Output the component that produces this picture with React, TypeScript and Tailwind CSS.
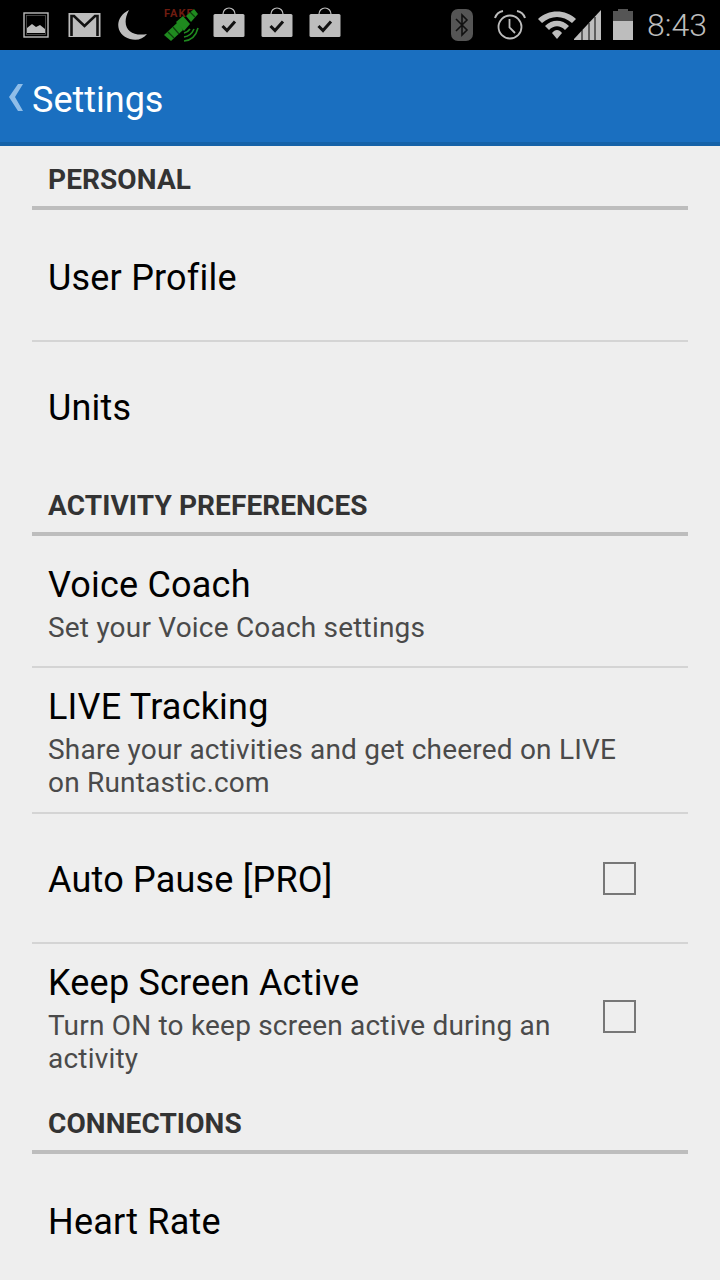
import React from "react";

const FONT = "font-['Roboto',sans-serif]";

function BagIcon() {
  return (
    <svg width="32" height="32" viewBox="0 0 32 32">
      <path d="M10 10 V7 a6 6 0 0 1 12 0 V10" fill="none" stroke="#bdbdbd" strokeWidth="1.2" />
      <rect x="0.5" y="7" width="31" height="23" rx="1.5" fill="#bdbdbd" />
      <path d="M9.5 19 L14 23.5 L22 14.5" fill="none" stroke="#111" strokeWidth="3" />
    </svg>
  );
}

function StatusBar() {
  return (
    <div className="h-[50px] bg-black flex items-center">
      <div className="flex items-center pl-[23px]">
        <svg width="26" height="26" viewBox="0 0 26 26">
          <rect x="1" y="1" width="24" height="24" fill="none" stroke="#bdbdbd" strokeWidth="1.4" />
          <rect x="3.5" y="3.5" width="19" height="19" fill="none" stroke="#555" strokeWidth="0.8" />
          <path d="M4 21 V16 L9 12 L13 15 L17 13 L22 17 V21 Z" fill="#bdbdbd" />
        </svg>
        <svg className="ml-[19px]" width="33" height="26" viewBox="0 0 33 26">
          <rect x="0.5" y="1" width="32" height="24" fill="#bdbdbd" />
          <path d="M3.5 24 V4 H6 L16.5 14 L27 4 H29.5 V24" fill="none" stroke="#111" strokeWidth="2.6" />
        </svg>
        <svg className="ml-[17px]" width="31" height="32" viewBox="0 0 31 32">
          <path d="M11 1 C-4 8 -3 26 12 30 C19 32 25 30 29 25 C12 28 2 18 11 1 Z" fill="#bdbdbd" />
        </svg>
        <svg className="ml-[14px]" width="36" height="36" viewBox="0 0 36 36">
          <text x="1" y="10" fontSize="11" fontWeight="700" fill="#6f1c10" fontFamily="Roboto, sans-serif" letterSpacing="1">FAKE</text>
          <path d="M1 28 L15 15 L20 23 L8 34 Z" fill="#1f8a1f" />
          <path d="M13 15 L20 9 L27 17 L21 24 Z" fill="#1f8a1f" />
          <path d="M23 9 L31 2 L35 7 L28 15 Z" fill="#1f8a1f" />
          <path d="M5 25 L11 31 M10 20 L16 27 M27 5 L32 10" stroke="#0d3d0d" strokeWidth="1.2" />
          <path d="M21 34 Q32 33 35 21 M21 30 Q28 29 31 22 M21 26 Q25 25 27 22" fill="none" stroke="#1f8a1f" strokeWidth="1.6" />
        </svg>
        <div className="ml-[14px] mb-[4px] flex gap-[16px]">
          <BagIcon />
          <BagIcon />
          <BagIcon />
        </div>
      </div>
      <div className="ml-auto flex items-center pr-[13px]">
        <svg width="22" height="32" viewBox="0 0 22 32">
          <rect x="0" y="0" width="22" height="32" rx="7" fill="#555" />
          <path d="M5 10 L16 21 L11 26 V6 L16 11 L5 22" fill="none" stroke="#111" strokeWidth="1.6" />
        </svg>
        <svg className="ml-[21px]" width="32" height="32" viewBox="0 0 32 32">
          <circle cx="16" cy="18" r="11.5" fill="none" stroke="#bdbdbd" strokeWidth="1.8" />
          <path d="M15.5 10 V18.5 L21 24" fill="none" stroke="#bdbdbd" strokeWidth="1.8" />
          <path d="M1 9 Q3 3 9 2 M23 2 Q29 3 31 9" fill="none" stroke="#bdbdbd" strokeWidth="2" />
        </svg>
        <svg className="ml-[12px]" width="64" height="32" viewBox="0 0 64 32">
          <path d="M0 10 C10 0 28 0 38 10 L34 14 C25 6 13 6 4 14 Z" fill="#bdbdbd" />
          <path d="M7 17 C14 10 24 10 31 17 L27 21 C22 16 16 16 11 21 Z" fill="#bdbdbd" />
          <path d="M14 24 C17 20 21 20 24 24 L19 30 Z" fill="#bdbdbd" />
          <path d="M36 30 L63 1 V31 H36 Z" fill="#bdbdbd" />
          <path d="M44 31 V21 M51 31 V14 M57 31 V8" stroke="#000" strokeWidth="1" />
        </svg>
        <svg className="ml-[11px]" width="20" height="32" viewBox="0 0 20 32">
          <rect x="5" y="0" width="10" height="3" fill="#555" />
          <rect x="0" y="2" width="20" height="10" fill="#555" />
          <rect x="0" y="12" width="20" height="19" fill="#bdbdbd" />
        </svg>
        <span className={`ml-[14px] text-[32px] leading-none text-[#bdbdbd] font-light ${FONT}`}>8:43</span>
      </div>
    </div>
  );
}

function Section({ title, className }: { title: string; className: string }) {
  return (
    <div className={`mx-[32px] border-b-4 border-[#bdbdbd] px-[16px] flex items-end ${className}`}>
      <span className="text-[28px] leading-[33px] font-bold tracking-[0.1px] text-[#333]">{title}</span>
    </div>
  );
}

function Row({
  title,
  subtitle,
  height,
  textPad,
  checkbox,
  divider = true,
}: {
  title: string;
  subtitle?: string[];
  height: string;
  textPad: string;
  checkbox?: boolean;
  divider?: boolean;
}) {
  return (
    <div
      className={`mx-[32px] px-[16px] flex items-center justify-between ${height} ${
        divider ? "border-b-2 border-[#d4d4d4]" : ""
      }`}
    >
      <div className={textPad}>
        <div className="text-[36px] leading-[44px] tracking-[0.2px] text-black">{title}</div>
        {subtitle && (
          <div className="mt-[4px]">
            {subtitle.map((line) => (
              <div key={line} className="text-[28px] leading-[33px] tracking-[0.2px] text-[#4a4a4a]">
                {line}
              </div>
            ))}
          </div>
        )}
      </div>
      {checkbox && <div className="w-[33px] h-[33px] border-2 border-[#777] mr-[36px] shrink-0" />}
    </div>
  );
}

export default function App() {
  return (
    <div className={`w-[720px] h-[1280px] overflow-hidden bg-[#eeeeee] ${FONT}`}>
      <StatusBar />
      <div className="h-[96px] bg-[#1a6fc0] border-b-4 border-[#1562a8] flex items-center pl-[8px]">
        <svg width="16" height="30" viewBox="0 0 16 30" className="mt-[4px]">
          <path d="M10 1 H15 L7 14 L15 28 H10 L1 14 Z" fill="#8fbde8" />
        </svg>
        <span className="ml-[8px] mt-[8px] text-[36px] leading-none text-white">Settings</span>
      </div>
      <Section title="PERSONAL" className="h-[64px] pb-[10px]" />
      <Row title="User Profile" height="h-[132px]" textPad="pt-[6px]" />
      <Row title="Units" height="h-[130px]" textPad="pt-[2px]" divider={false} />
      <Section title="ACTIVITY PREFERENCES" className="h-[64px] pb-[10px]" />
      <Row title="Voice Coach" subtitle={["Set your Voice Coach settings"]} height="h-[132px]" textPad="pt-[4px]" />
      <Row
        title="LIVE Tracking"
        subtitle={["Share your activities and get cheered on LIVE", "on Runtastic.com"]}
        height="h-[146px]"
        textPad="pt-[4px]"
      />
      <Row title="Auto Pause [PRO]" height="h-[130px]" textPad="pt-[4px]" checkbox />
      <Row
        title="Keep Screen Active"
        subtitle={["Turn ON to keep screen active during an", "activity"]}
        height="h-[148px] pb-[4px]"
        textPad="pt-[4px]"
        checkbox
        divider={false}
      />
      <Section title="CONNECTIONS" className="h-[62px] pb-[10px]" />
      <Row title="Heart Rate" height="h-[134px]" textPad="pt-[2px]" divider={false} />
    </div>
  );
}
